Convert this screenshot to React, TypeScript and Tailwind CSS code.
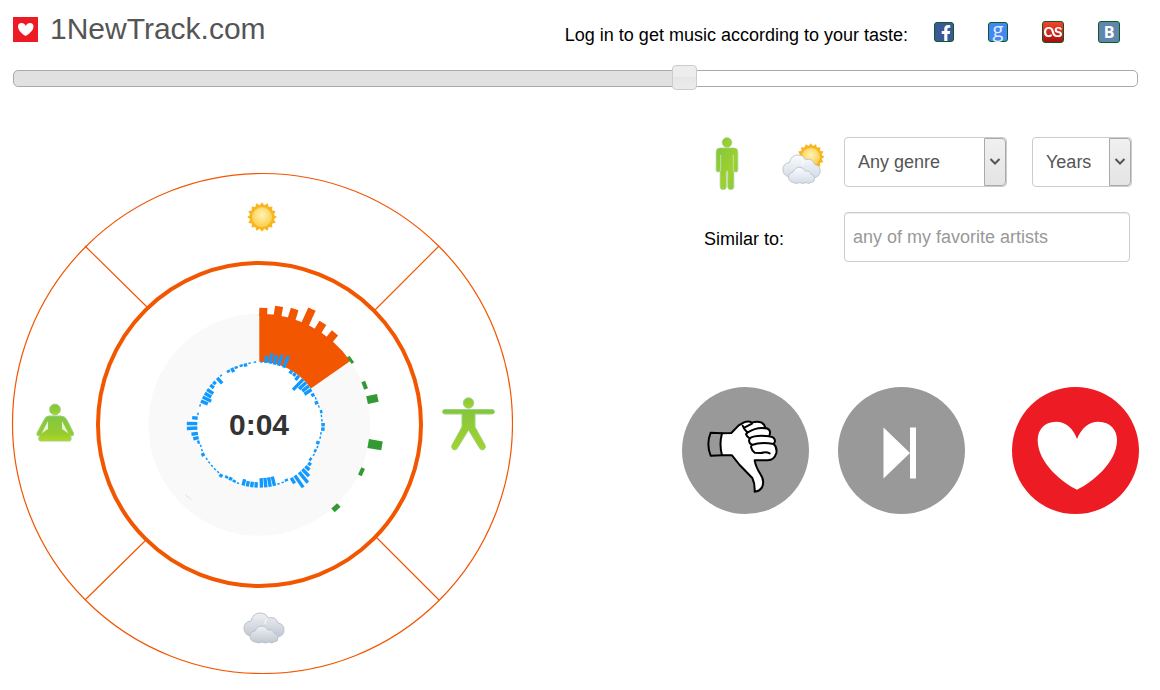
import React, { useState } from 'react';
import { FaFacebookF, FaLastfm } from 'react-icons/fa';

// [angle, length]: a positive length grows outwards from the ring
const wave: [number, number][] = [
  [2, 1], [6, 7], [10, 10], [14, 9], [18, 11], [23, 12],
  [31, -3], [35, -3], [39, -5], [44, -14], [48, -9], [52, -8], [56, -8], [61, -3],
  [65, -1], [69, -3], [73, -1], [78, 2], [82, 1], [86, 1], [90, 3], [94, 3], [98, -1], [102, -1],
  [107, -3], [111, -1], [115, -2], [119, -1], [124, -2], [128, 3],
  [132, 5], [136, 9], [140, 13], [145, 14], [149, 6], [154, -2], [158, -1], [162, -1],
  [166, -9], [170, -9], [174, -9], [178, -9], [183, -5], [187, -5], [191, -5], [195, -6],
  [200, -1], [204, -2], [208, -3], [212, -2], [217, 3], [221, 1], [225, 1], [229, 1], [233, 1],
  [237, 1], [242, 3], [246, 1], [250, -1], [254, 2], [258, 5], [262, 6], [267, 10], [271, 10], [276, 5],
  [280, -1], [288, -1], [292, -7], [296, -9], [300, -7], [304, -7], [309, -4], [313, -3], [318, -7],
  [322, -1], [330, -2], [334, -4], [338, -2], [343, -2], [347, -3], [351, -1], [356, 1]
];

const orangeBars = [
  { angle: 2, size: 6, width: 8 },
  { angle: 9.5, size: 9, width: 8 },
  { angle: 17, size: 10, width: 8 },
  { angle: 24.5, size: 16, width: 8 },
  { angle: 32, size: 9, width: 8 },
  { angle: 39.5, size: 8, width: 8 }
];

const greenBars = [
  { angle: 54.6, size: 3, width: 8 },
  { angle: 69.5, size: 4, width: 8 },
  { angle: 77.2, size: 11, width: 8 },
  { angle: 99.8, size: 14, width: 9 },
  { angle: 114.7, size: 4, width: 8 },
  { angle: 137.3, size: 5, width: 8 }
];

const StandingMan = () => (
  <svg className="w-6 h-[53px]" viewBox="0 0 24 53">
    <defs>
      <linearGradient id="stand" x1="0" y1="0" x2="1" y2="1">
        <stop offset="0" stopColor="#84c63c" />
        <stop offset="0.6" stopColor="#a0d02e" />
        <stop offset="1" stopColor="#88c83c" />
      </linearGradient>
    </defs>
    <g fill="url(#stand)" stroke="#9ad384" strokeWidth=".8">
      <circle cx="12" cy="5.5" r="4.8" />
      <path d="M5 11H19Q22.800 11 22.800 15V33Q22.800 35 21 35Q18.800 35 18.800 33V50Q18.500 53 15.500 52.500Q13 52.500 12.800 50V34H11.200V50Q11 52.500 8.500 52.500Q5.500 53 5.200 50V33Q5.200 35 3 35Q1.200 35 1.200 33V15Q1.200 11 5 11Z" />
    </g>
    <path d="M5.700 18V34M18.300 18V34" stroke="#b9e4a6" />
  </svg>
);

const YogaMan = () => (
  <svg className="w-[38px] h-[39px]" viewBox="0 0 38 39">
    <defs>
      <linearGradient id="yoga" x1="0" y1="0" x2="0" y2="1">
        <stop offset="0" stopColor="#82c544" />
        <stop offset="0.7" stopColor="#96cc30" />
        <stop offset="1" stopColor="#b4d81c" />
      </linearGradient>
    </defs>
    <g fill="url(#yoga)" stroke="#9ad384" strokeWidth="1">
      <circle cx="19" cy="6.500" r="5.400" />
      <path d="M13 13H25Q29 13 31 17L37.500 30Q38 33 35.500 33L34.500 32.500Q36 37 34 38H4Q1.500 37 4 32.500L2 33Q.5 32 1 30L8 17Q9.500 13 13 13Z" />
    </g>
    <path d="M12 18V26L5.500 30.500ZM26 18V26L32.500 30.500Z" fill="#e6f5da" />
  </svg>
);

const StretchMan = () => (
  <svg className="w-[53px] h-[54px]" viewBox="0 0 53 54">
    <defs>
      <linearGradient id="stretch" x1="0" y1="0" x2="0" y2="1">
        <stop offset="0" stopColor="#84c63c" />
        <stop offset="1" stopColor="#a6d22c" />
      </linearGradient>
    </defs>
    <g fill="url(#stretch)" stroke="#9ad384" strokeWidth="1">
      <path d="M3 12.500H50Q52.500 12.500 52.500 14.700Q52.500 17 50 17H33V30L43 48Q44 51 42 52.500Q39 54 37.500 51L26.500 33L15.500 51Q14 54 11 52.500Q9 51 10 48L20 30V17H3Q.5 17 .5 14.700Q.5 12.500 3 12.500Z" />
      <circle cx="26.500" cy="6" r="5.200" />
    </g>
  </svg>
);

const rays = Array.from({ length: 32 }, (_, i) => {
  const r = i % 2 ? 12 : 14.8;
  const a = (i * Math.PI) / 16;
  return `${15 + r * Math.sin(a)},${15 - r * Math.cos(a)}`;
}).join(' ');

const SunShape = () => (
  <>
    <defs>
      <radialGradient id="sun" cx="0.5" cy="0.4" r="0.6">
        <stop offset="0" stopColor="#fff3b4" />
        <stop offset="1" stopColor="#fad04e" />
      </radialGradient>
    </defs>
    <polygon points={rays} fill="#f8b51c" />
    <circle cx="15" cy="15" r="9.500" fill="url(#sun)" stroke="#fbd268" />
  </>
);

const CloudShape = ({ dark = false }) => (
  <>
    <defs>
      <linearGradient id={dark ? 'cloudDark' : 'cloudLight'} x1="0" y1="0" x2="0" y2="1">
        <stop offset="0" stopColor={dark ? '#eff1f4' : '#fbfcfe'} />
        <stop offset="1" stopColor={dark ? '#c0c7d1' : '#d5dce6'} />
      </linearGradient>
    </defs>
    <g fill={dark ? 'url(#cloudDark)' : 'url(#cloudLight)'} stroke={dark ? '#bcc3cd' : '#b9c3d1'} strokeWidth="1">
      <path d="M8 24Q1 23 1 16Q1 10 8 9Q10 1 17 1Q23 1 25 6Q33 4 35 11Q41 12 41 18Q41 24 34 25Z" />
      <path d="M25 6Q22 7 22 12" fill="none" stroke="#fff" />
      <path d="M12 30Q7 29 7 24Q7 20 12 19Q14 14 19 14Q23 14 25 18Q30 17 31 21Q35 22 35 26Q35 30 31 30Q29 32 26 30Q22 32 19 30Q16 32 12 30Z" />
    </g>
  </>
);

const Ring = () => (
  <svg className="w-full h-full" viewBox="11 172 502 502">
    <g fill="none" stroke="#f25600" strokeWidth="1.200">
      <circle cx="262.500" cy="423.500" r="250" />
      <path d="M85 246L148 308M439 246L375 310M85 600L146 540M439 600L376 537" />
    </g>
    <circle cx="259.500" cy="424.500" r="161.500" fill="#fff" stroke="#f25600" strokeWidth="4" />

    {/* Progress */}
    <circle cx="259.300" cy="424.700" r="87" fill="none" stroke="#f9f9f9" strokeWidth="48" />
    <g transform="translate(259.300 424.700)">
      <path d="M0 -111A111 111 0 0 1 90.900 -63.700L51.600 -36.200A63 63 0 0 0 0 -63Z" fill="#f25600" />
      {orangeBars.map((bar) => (
        <rect key={bar.angle} x={-bar.width / 2} y={-111 - bar.size} width={bar.width} height={bar.size + 2} fill="#f25600" transform={`rotate(${bar.angle})`} />
      ))}
      {greenBars.map((bar) => (
        <rect key={bar.angle} x={-bar.width / 2} y={-110.5 - bar.size} width={bar.width} height={bar.size} fill="#339933" transform={`rotate(${bar.angle})`} />
      ))}
      <path d="M-74 70L-68 75" stroke="#d5e8d5" />
      {wave.map(([angle, size]) => (
        <rect
          key={angle}
          x={Math.abs(size) === 1 ? -1.2 : -1.7}
          y={size > 0 ? -62.5 - size : -63}
          width={Math.abs(size) === 1 ? 2.4 : 3.4}
          height={Math.abs(size) + 0.5}
          fill="#1199ff"
          transform={`rotate(${angle})`}
        />
      ))}
    </g>
    <text x="259" y="435" textAnchor="middle" fill="#333" className="font-['Liberation_Sans',Arial,sans-serif] text-[30px] font-bold">0:04</text>
  </svg>
);

const ThumbDown = () => (
  <svg className="w-full h-full" viewBox="36 36 381 381" fill="none" stroke="#000" strokeWidth="6" strokeLinejoin="round" strokeLinecap="round">
    <path d="M156 175L122 173Q108 208 122 242L156 241" />
    <path
      fill="#fff"
      d="M156 175L184 174L206 151L222 142Q236 137 246 143Q262 137 275 143Q285 149 285 159Q301 161 300 174L298 184Q315 186 315 199L311 207Q322 217 319 234Q313 255 293 256L254 256Q257 275 271 297Q285 318 276 337Q268 349 254 350Q255 325 247 309L209 270L186 241L156 241Q147 208 156 175Z"
    />
    <path d="M218 152Q222 163 232 172L228 178Q230 185 239 190L237 198Q238 205 245 209L243 216Q246 228 254 233L275 234Q288 229 299 235" />
    <path d="M223 158L246 146M232 173Q260 156 285 160M239 190Q256 179 298 184M245 210Q274 199 311 207" />
  </svg>
);

const Arrow = () => (
  <span className="pointer-events-none absolute inset-y-px right-px flex w-[22px] items-center justify-center rounded-r-sm border border-[#aaa] bg-gradient-to-b from-[#f0f0f0] to-[#e4e4e4]">
    <svg className="w-3 h-3" viewBox="0 0 12 12" fill="none" stroke="#555" strokeWidth="2">
      <path d="M1.500 3L6 7.500L10.500 3" />
    </svg>
  </span>
);

const App = () => {
  const [position, setPosition] = useState(599);
  const [artist, setArtist] = useState('');

  return (
    <div className="min-h-screen bg-white font-['Liberation_Sans',Arial,sans-serif] text-lg leading-6 text-black">
      {/* Header */}
      <header className="flex items-start justify-between pl-[13px] pr-10 h-[65px]">
        <a href="#/" className="flex items-center gap-3 pt-3">
          <svg className="w-[25px] h-[25px]" viewBox="0 0 25 25">
            <rect width="25" height="25" fill="#ed1c24" />
            <path d="M12.500 19Q5 14.500 5 9.500Q5 6 8.500 6Q11.500 6 12.800 9Q14 6 17 6Q20.500 6 20.500 9.500Q20.500 14.500 12.500 19Z" fill="#fff" />
          </svg>
          <h1 className="text-[30px] leading-[34px] text-[#555]">1NewTrack.com</h1>
        </a>
        <div className="flex items-start pt-[21px]">
          <span className="pt-0.5">Log in to get music according to your taste:</span>
          <nav className="ml-[26px] flex items-center gap-[34px]">
            <a href="#/facebook" aria-label="Facebook" className="flex h-5 w-5 items-end justify-end rounded-[3px] border border-[#0a5c1c] bg-[#3b5998] pr-px text-white">
              <FaFacebookF className="h-4 w-3" />
            </a>
            <a href="#/google" aria-label="Google" className="flex h-5 w-5 items-center justify-center rounded-[3px] border border-[#0a5c1c] bg-[#4387f4] pb-1 font-['Open_Sans',sans-serif] text-xl leading-4 text-[#e4eefe]">
              g
            </a>
            <a href="#/lastfm" aria-label="Last.fm" className="flex h-[22px] w-[22px] items-center justify-center rounded-[3px] border border-[#0a5c1c] bg-gradient-to-b from-[#f4442c] to-[#a80c0c] text-white">
              <FaLastfm className="h-[18px] w-[18px]" />
            </a>
            <a href="#/vk" aria-label="VK" className="flex h-[22px] w-[22px] items-center justify-center rounded-[3px] border border-[#0a5c1c] bg-[#5f86ac] font-['Open_Sans',sans-serif] text-base font-bold leading-4 text-white">
              B
            </a>
          </nav>
        </div>
      </header>

      {/* Seek bar */}
      <div className="pl-[13px] pr-[22px]">
        <input
          type="range"
          aria-label="Position"
          min={0}
          max={1000}
          value={position}
          onChange={(e) => setPosition(Number(e.target.value))}
          style={{ '--played': `${position / 10}%` } as React.CSSProperties}
          className="block h-[27px] w-full appearance-none bg-transparent [&::-webkit-slider-runnable-track]:h-[17px] [&::-webkit-slider-runnable-track]:rounded-[5px] [&::-webkit-slider-runnable-track]:border [&::-webkit-slider-runnable-track]:border-[#aaa] [&::-webkit-slider-runnable-track]:bg-[linear-gradient(to_right,#e1e1e1_var(--played),#fff_var(--played))] [&::-webkit-slider-thumb]:-mt-[6px] [&::-webkit-slider-thumb]:h-[25px] [&::-webkit-slider-thumb]:w-[25px] [&::-webkit-slider-thumb]:appearance-none [&::-webkit-slider-thumb]:rounded [&::-webkit-slider-thumb]:border [&::-webkit-slider-thumb]:border-[#ccc] [&::-webkit-slider-thumb]:bg-[linear-gradient(#ededed_50%,#e6e6e6_50%,#ebebeb)]"
        />
      </div>

      <main className="flex items-start justify-between pl-[11px] pr-[21px]">
        {/* Mood wheel */}
        <section className="relative mt-20 h-[502px] w-[502px] shrink-0">
          <Ring />
          <button aria-label="Sunny" className="absolute left-1/2 top-[30px] -translate-x-1/2">
            <svg className="w-[30px] h-[30px]" viewBox="0 0 30 30"><SunShape /></svg>
          </button>
          <button aria-label="Calm" className="absolute left-[25px] top-[231px]">
            <YogaMan />
          </button>
          <button aria-label="Active" className="absolute right-[18px] top-[225px]">
            <StretchMan />
          </button>
          <button aria-label="Cloudy" className="absolute bottom-[30px] left-[232px]">
            <svg className="w-[42px] h-8" viewBox="0 0 42 32"><CloudShape dark /></svg>
          </button>
        </section>

        {/* Filters and actions */}
        <section className="mt-[45px] w-[457px]">
          <div className="flex items-start">
            <div className="flex w-[162px] items-center gap-[42px] pl-[33px]">
              <StandingMan />
              <svg className="w-[45px] h-[42px]" viewBox="0 0 45 42">
                <g transform="translate(16) scale(.92)"><SunShape /></g>
                <g transform="translate(1 11) scale(.93 .95)"><CloudShape /></g>
              </svg>
            </div>
            <div className="relative w-[163px]">
              <select aria-label="Genre" className="block h-[50px] w-full appearance-none rounded border border-[#ccc] bg-white pl-[13px] text-[#555]">
                <option>Any genre</option>
              </select>
              <Arrow />
            </div>
            <div className="relative ml-[25px] w-[100px]">
              <select aria-label="Years" className="block h-[50px] w-full appearance-none rounded border border-[#ccc] bg-white pl-[13px] text-[#555]">
                <option>Years</option>
              </select>
              <Arrow />
            </div>
          </div>

          <div className="mt-[22px] flex items-center">
            <label htmlFor="artist" className="w-[162px] pl-[22px] pt-1">Similar to:</label>
            <input
              id="artist"
              type="text"
              value={artist}
              onChange={(e) => setArtist(e.target.value)}
              placeholder="any of my favorite artists"
              className="h-[50px] w-[286px] rounded border border-[#ccc] px-2 text-[#555] shadow-[inset_0_1px_1px_rgba(0,0,0,0.075)] placeholder:text-[#999]"
            />
          </div>

          <div className="mt-[125px] flex">
            <button aria-label="Dislike" className="h-[127px] w-[127px] rounded-full bg-[#999]">
              <ThumbDown />
            </button>
            <button aria-label="Next" className="ml-[29px] h-[127px] w-[127px] rounded-full bg-[#999]">
              <svg className="w-full h-full" viewBox="0 0 127 127" fill="#fff">
                <path d="M45.500 40.500L72 66L45.500 91.500ZM72 40.500H78V91.500H72Z" />
              </svg>
            </button>
            <button aria-label="Like" className="ml-[47px] h-[127px] w-[127px] rounded-full bg-[#ed1c24]">
              <svg className="w-full h-full" viewBox="36 36 381 381" fill="#fff">
                <path d="M231 344C190 325 113 265 113 195C113 165 132 140 168 140C198 140 220 160 231 192C244 160 265 140 295 140C332 140 351 165 351 195C351 265 272 325 231 344Z" />
              </svg>
            </button>
          </div>
        </section>
      </main>
    </div>
  );
};

export default App;
